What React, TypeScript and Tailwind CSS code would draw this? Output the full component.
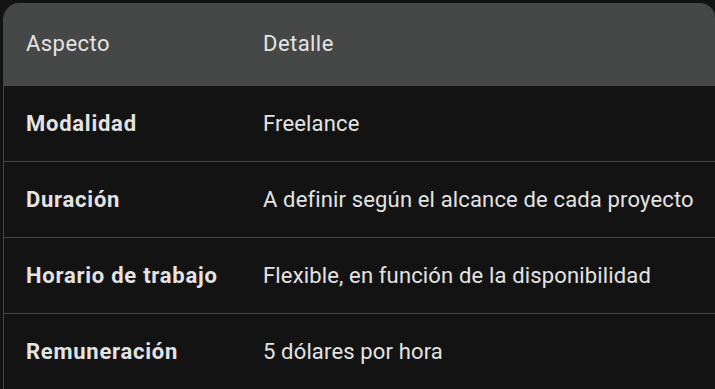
const rows = [
  { aspecto: "Modalidad", detalle: "Freelance" },
  { aspecto: "Duración", detalle: "A definir según el alcance de cada proyecto" },
  { aspecto: "Horario de trabajo", detalle: "Flexible, en función de la disponibilidad" },
  { aspecto: "Remuneración", detalle: "5 dólares por hora" },
];

export default function App() {
  return (
    <div className="min-h-screen h-[389px] overflow-hidden bg-[#131313] pt-[3px] pl-[3px] font-['Roboto',sans-serif] text-[22px] tracking-[0.15px] text-[#e3e3e3]">
      <div className="w-[713px] overflow-hidden rounded-t-[16px] border-x border-[#444546]">
        {/* Header */}
        <div className="grid grid-cols-[237px_1fr] bg-[#464747] tracking-[0.45px]">
          <div className="px-[22px] pt-[26px] pb-[28px] leading-[29px]">Aspecto</div>
          <div className="px-[22px] pt-[26px] pb-[28px] leading-[29px]">Detalle</div>
        </div>

        {/* Body */}
        {rows.map((row) => (
          <div
            key={row.aspecto}
            className="grid grid-cols-[237px_1fr] border-b border-[#444546]"
          >
            <div className="px-[22px] py-[23px] font-bold leading-[29px] tracking-[0.75px] whitespace-nowrap">
              {row.aspecto}
            </div>
            <div className="px-[22px] py-[23px] leading-[29px] whitespace-nowrap">
              {row.detalle}
            </div>
          </div>
        ))}
      </div>
    </div>
  );
}
